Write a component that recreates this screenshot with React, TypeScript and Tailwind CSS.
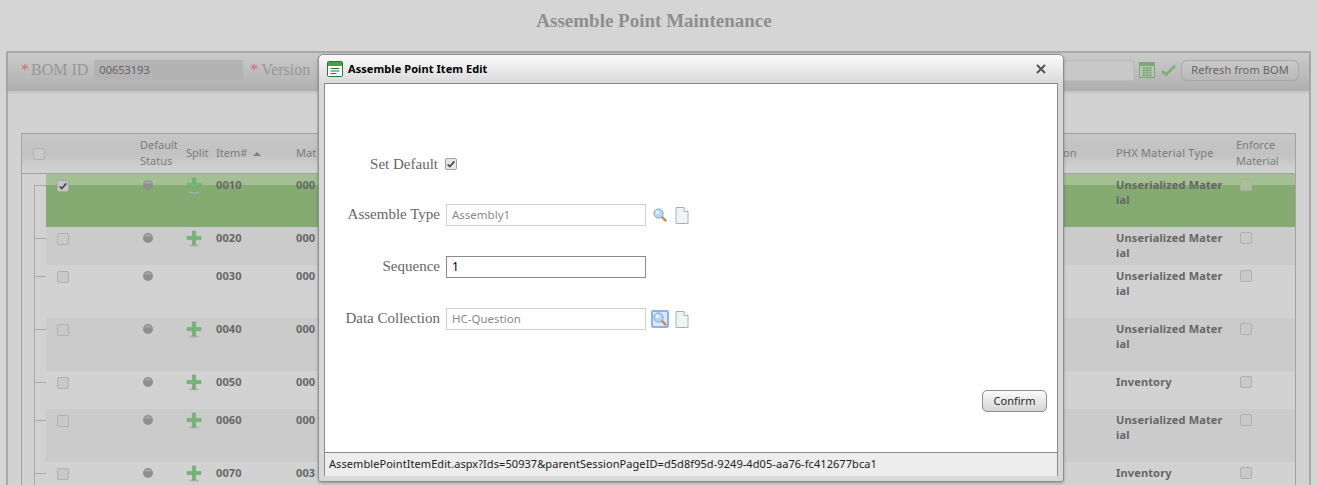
import React from 'react';

interface Row {
  no: string;
  mat: string;
  type: string;
  h: string;
  split: boolean;
  selected?: boolean;
  alt?: boolean;
  desc?: string;
}

const rows: Row[] = [
  { no: '0010', mat: '000', type: 'Unserialized Material', h: 'h-[53px]', split: true, selected: true },
  { no: '0020', mat: '000', type: 'Unserialized Material', h: 'h-[38px]', split: true, alt: true },
  { no: '0030', mat: '000', type: 'Unserialized Material', h: 'h-[53px]', split: false },
  { no: '0040', mat: '000', type: 'Unserialized Material', h: 'h-[53px]', split: true, alt: true },
  { no: '0050', mat: '000', type: 'Inventory', h: 'h-[38px]', split: true },
  { no: '0060', mat: '000', type: 'Unserialized Material', h: 'h-[53px]', split: true, alt: true },
  { no: '0070', mat: '003', type: 'Inventory', h: 'h-[38px]', split: true, desc: '() TO ST/MN 120' },
];

const Check = ({ checked, className }: { checked?: boolean; className?: string }) => (
  <span className={`flex h-[12px] w-[12px] items-center justify-center rounded-[2px] border ${className ?? 'border-[#b0b0b0] bg-[#c9c9c9]'}`}>
    {checked && (
      <svg viewBox="0 0 12 12" className="h-[10px] w-[10px]">
        <path d="M2 6.5 L4.6 9 L10 2.8" fill="none" stroke="#4a4a4a" strokeWidth="2" />
      </svg>
    )}
  </span>
);

const Plus = () => (
  <svg viewBox="0 0 16 18" className="h-[18px] w-[16px]">
    <ellipse cx="8" cy="15.5" rx="5" ry="1" fill="#b0b0b0" />
    <path d="M6.4 1h3.2v5.4H15v3.2H9.6V15H6.4V9.6H1V6.4h5.4z" fill="#74b478" stroke="#5fa565" strokeWidth="0.5" />
  </svg>
);

const Dot = () => (
  <svg viewBox="0 0 10 10" className="h-[10px] w-[10px]">
    <circle cx="5" cy="5" r="5" fill="#8f8f8f" />
    <path d="M1 3.6a4.6 4.6 0 0 1 8 0z" fill="#a8a8a8" />
  </svg>
);

const Magnifier = ({ focused }: { focused?: boolean }) => (
  <span className={`flex h-[18px] w-[18px] items-center justify-center rounded-[2px] ${focused ? 'border-2 border-[#8ab4f0] bg-[#dbe8fb]' : ''}`}>
    <svg viewBox="0 0 14 14" className="h-[14px] w-[14px]">
      <path d="M8.5 8.5 L12.5 12.5" stroke="#c08a40" strokeWidth="2.4" strokeLinecap="round" />
      <circle cx="5.5" cy="5.5" r="4.6" fill="#bcd6f2" stroke="#7fa6d0" />
      <circle cx="4.4" cy="4.4" r="1.8" fill="#e8f2fc" />
    </svg>
  </span>
);

const Page = () => (
  <svg viewBox="0 0 14 17" className="h-[17px] w-[14px]">
    <path d="M1 .5h8l4 4v12H1z" fill="#eef4f3" stroke="#a4b4b2" />
    <path d="M9 .5v4h4" fill="#ffffff" stroke="#a4b4b2" />
  </svg>
);

const FormRow = ({ label, className, children }: { label: string; className?: string; children: React.ReactNode }) => (
  <div className={`flex h-[22px] items-center ${className ?? ''}`}>
    <span className="w-[115px] pb-[2px] text-right font-['Liberation_Serif',serif] text-[15px] text-[#666666]">{label}</span>
    <div className="ml-[6px] flex items-center">{children}</div>
  </div>
);

const App: React.FC = () => {
  return (
    <div className="relative h-[485px] w-[1317px] overflow-hidden bg-[#d5d5d5] font-['Noto_Sans',sans-serif] text-[11px] text-[#7c7c7c]">
      <h1 className="flex h-[43px] items-center justify-center pr-[9px] font-['Liberation_Serif',serif] text-[19px] font-bold text-[#8e8e8e]">
        Assemble Point Maintenance
      </h1>

      <div className="mx-[6px] mt-[8px] h-[450px] border-2 border-b-0 border-[#a9a9a9] bg-[#d2d2d2]">
        {/* toolbar */}
        <div className="flex h-[38px] items-center justify-between bg-gradient-to-b from-[#cbcbcb] to-[#afafaf] pb-[4px] pl-[13px] pr-[4px] shadow-[0_2px_3px_rgba(0,0,0,0.08)]">
          <div className="flex items-center font-['Liberation_Serif',serif] text-[16px] text-[#979797]">
            <span className="mr-[2px] text-[#d66a6a]">*</span>
            <span>BOM ID</span>
            <span className="ml-[6px] flex h-[20px] w-[149px] items-center bg-[#b3b3b3] px-[5px] font-['Noto_Sans',sans-serif] text-[11px] text-[#6b5f6b]">
              00653193
            </span>
            <span className="ml-[7px] mr-[3px] text-[#d66a6a]">*</span>
            <span>Version</span>
          </div>
          <div className="flex items-center">
            <span className="mr-[5px] h-[21px] w-[100px] border border-[#bcbcbc] bg-[#c8c8c8]" />
            <svg viewBox="0 0 16 16" className="mr-[6px] h-[16px] w-[16px]">
              <rect x="0.5" y="0.5" width="15" height="15" fill="#b6c9ae" stroke="#7fa878" />
              <rect x="1" y="1" width="14" height="3" fill="#7fa878" />
              <path d="M3 6h10M3 8.5h10M3 11h10M3 13.5h10M5 5v10M8 5v10M11 5v10" stroke="#7fa878" strokeWidth="1" />
            </svg>
            <svg viewBox="0 0 16 14" className="mr-[5px] h-[14px] w-[15px]">
              <path d="M1 8 L5.5 12 L15 2.5" fill="none" stroke="#80ae74" strokeWidth="3" />
            </svg>
            <span className="mr-[6px] flex h-[21px] w-[118px] items-center justify-center rounded-[6px] border border-[#a9a9a9] bg-gradient-to-b from-[#c9c9c9] to-[#b8b8b8] text-[11px] tracking-[0.1px] text-[#6a5f66]">
              Refresh from BOM
            </span>
          </div>
        </div>

        {/* grid */}
        <div className="mx-[13px] mt-[42px] border border-[#a2a2a2]">
          <div className="flex h-[40px] items-center border-b border-[#a2a2a2] bg-gradient-to-b from-[#c6c6c6] via-[#c2c2c2] to-[#d3d3d3]">
            <Check className="ml-[11px] border-[#b0b0b0] bg-[#c9c9c9]" />
            <span className="mb-[2px] ml-[95px] w-[46px] leading-[16px]">Default Status</span>
            <span className="w-[30px]">Split</span>
            <span className="flex w-[80px] items-center">
              Item#
              <svg viewBox="0 0 8 4" className="ml-[6px] h-[4px] w-[8px]">
                <path d="M0 4 L4 0 L8 4z" fill="#808080" />
              </svg>
            </span>
            <span>Mat</span>
            <span className="ml-auto w-[53px]">on</span>
            <span className="w-[120px] tracking-[0.2px]">PHX Material Type</span>
            <span className="mb-[2px] w-[59px] pr-[6px] leading-[16px]">Enforce Material</span>
          </div>
          {rows.map((row, i) => (
            <div key={row.no} className={`flex ${row.h}`}>
              <div className="relative w-[24px] shrink-0">
                <div className={`absolute left-[12px] w-px bg-[#a8a8a8] ${i === 0 ? 'top-[11px] bottom-0' : 'inset-y-0'}`} />
                <div className="absolute left-[12px] top-[11px] h-px w-[12px] bg-[#a8a8a8]" />
              </div>
              <div
                className={`flex flex-1 pt-[3px] font-bold text-[#666666] ${
                  row.selected
                    ? 'bg-gradient-to-b from-[#a4bf93] from-[21%] to-[#85aa72] to-[21%]'
                    : row.alt
                      ? 'bg-[#cbcbcb]'
                      : ''
                }`}
              >
                <div className="mt-[1px] flex h-[16px] w-[94px] items-center pl-[11px]">
                  <Check checked={row.selected} className={row.selected ? 'border-[#a8a8a8] bg-[#c6c6c6]' : undefined} />
                </div>
                <div className="flex h-[16px] w-[46px] items-center pl-[3px]">
                  <Dot />
                </div>
                <div className="flex h-[20px] w-[30px] items-start">{row.split && <Plus />}</div>
                <span className="w-[80px] leading-[16px] tracking-[0.1px]">{row.no}</span>
                <span className="w-[120px] leading-[16px] tracking-[0.1px]">{row.mat}</span>
                {row.desc && <span className="pt-[16px] font-normal leading-[15px]">{row.desc}</span>}
                <span className="ml-auto w-[120px] break-all pr-[12px] leading-[15px] tracking-[0.15px]">{row.type}</span>
                <div className="flex h-[16px] w-[59px] items-center pl-[4px]">
                  <Check className={row.selected ? 'border-[#a3b798] bg-[#a9bd9c]' : undefined} />
                </div>
              </div>
            </div>
          ))}
        </div>
      </div>

      {/* dialog */}
      <div className="absolute left-[318px] top-[54px] flex h-[428px] w-[746px] flex-col rounded-t-[5px] rounded-b-[3px] border border-[#8d8d8d] bg-gradient-to-b from-[#fafafa] to-[#d8d8d8] to-[30px] px-[5px] pb-[5px] shadow-[0_1px_3px_rgba(0,0,0,0.3)]">
        <div className="flex h-[28px] shrink-0 items-center">
          <svg viewBox="0 0 16 16" className="ml-[3px] h-[16px] w-[16px]">
            <rect x="0.5" y="0.5" width="15" height="15" rx="1" fill="#ffffff" stroke="#1f7a3a" />
            <rect x="1" y="1" width="14" height="4" fill="#46a04a" />
            <path d="M3.5 7.5h9M3.5 10h9M3.5 12.5h6" stroke="#1f7a3a" strokeWidth="1.2" />
          </svg>
          <span className="ml-[5px] text-[11px] font-bold tracking-[0.07px] text-black">Assemble Point Item Edit</span>
          <svg viewBox="0 0 10 10" className="ml-auto mr-[12px] h-[10px] w-[10px]">
            <path d="M1 1 L9 9 M9 1 L1 9" stroke="#555555" strokeWidth="2" />
          </svg>
        </div>
        <div className="flex flex-1 flex-col border border-b-0 border-[#8a8a8a] bg-white">
          <div className="relative flex-1 pt-[70px] text-[11.5px] text-[#8a8a8a]">
            <FormRow label="Set Default" className="-ml-[2px]">
              <span className="mb-[2px] ml-[1px]">
                <Check checked className="border-[#a0a0a0] bg-[#e6e6e6]" />
              </span>
            </FormRow>
            <FormRow label="Assemble Type" className="mt-[28px]">
              <span className="flex h-[22px] w-[200px] items-center border border-[#cfcfcf] px-[5px]">Assembly1</span>
              <span className="ml-[5px]"><Magnifier /></span>
              <span className="ml-[6px]"><Page /></span>
            </FormRow>
            <FormRow label="Sequence" className="mt-[30px]">
              <span className="flex h-[22px] w-[200px] items-center border border-[#8a8a8a] px-[5px] text-[12px] text-black">1</span>
            </FormRow>
            <FormRow label="Data Collection" className="mt-[30px]">
              <span className="flex h-[22px] w-[200px] items-center border border-[#cfcfcf] px-[5px]">HC-Question</span>
              <span className="ml-[5px]"><Magnifier focused /></span>
              <span className="ml-[6px]"><Page /></span>
            </FormRow>
            <button className="absolute right-[10px] bottom-[40px] flex h-[22px] w-[65px] items-center justify-center rounded-[5px] border border-[#8d8d8d] bg-gradient-to-b from-[#fbfbfb] to-[#d4d4d4] text-[11px] text-[#2a2a2a]">
              Confirm
            </button>
          </div>
          <div className="flex h-[24px] shrink-0 items-center border-t border-[#8a8a8a] bg-[#ededed] px-[4px] text-[11px] tracking-[0.07px] text-[#222222]">
            AssemblePointItemEdit.aspx?Ids=50937&amp;parentSessionPageID=d5d8f95d-9249-4d05-aa76-fc412677bca1
          </div>
        </div>
      </div>
    </div>
  );
};

export default App;
